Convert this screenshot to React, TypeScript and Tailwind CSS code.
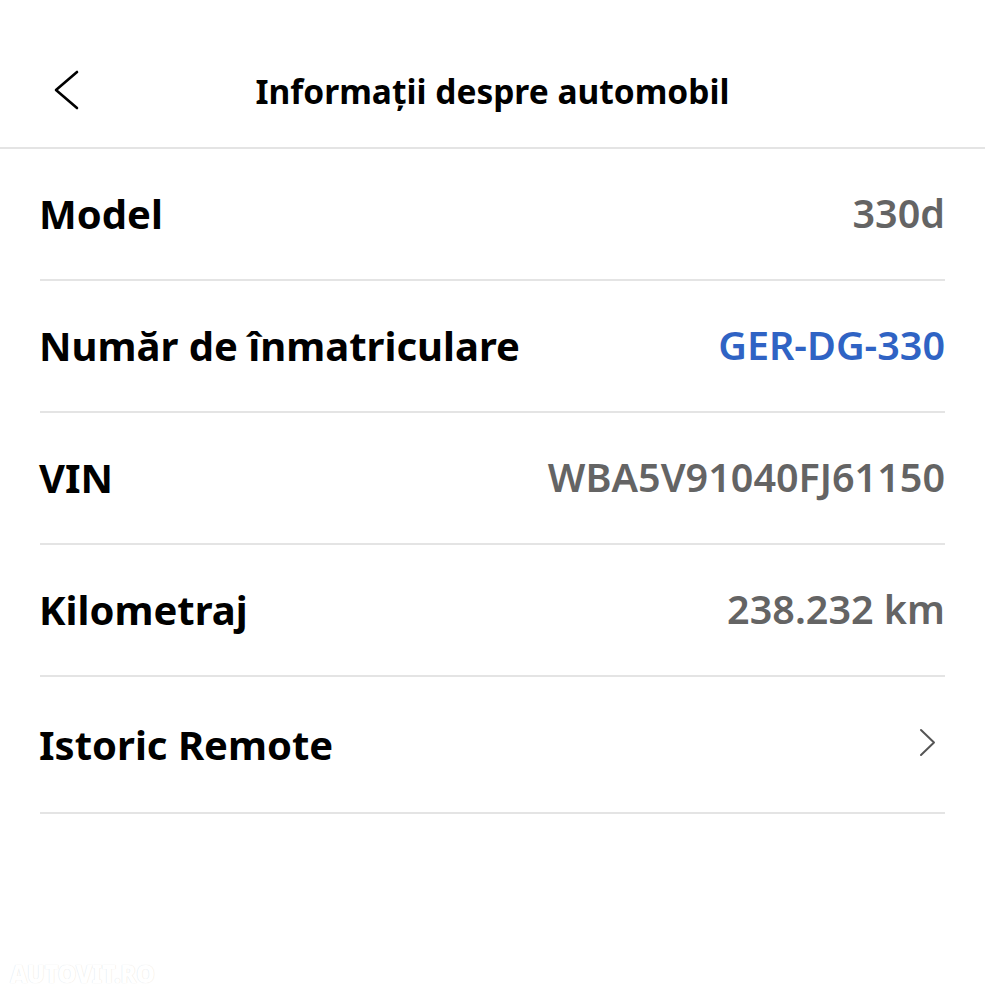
const rows = [
  { label: "Model", value: "330d" },
  { label: "Număr de înmatriculare", value: "GER-DG-330", link: true },
  { label: "VIN", value: "WBA5V91040FJ61150" },
  { label: "Kilometraj", value: "238.232 km" },
];

export default function App() {
  return (
    <div className="relative w-[985px] h-[1000px] bg-white overflow-hidden" style={{ fontFamily: '"Noto Sans", sans-serif' }}>
      <header className="h-[149px] flex items-center border-b-2 border-[#e4e4e4] relative">
        <button className="absolute left-[53px] top-[70px] text-black">
          <svg width="28" height="40" viewBox="0 0 28 40" fill="none" stroke="currentColor" strokeWidth="2.6" strokeLinecap="round" strokeLinejoin="round">
            <path d="M24 2 L3 20 L24 38" />
          </svg>
        </button>
        <h1 className="w-full text-center text-[33.5px] font-bold text-black pt-[36px]">
          Informații despre automobil
        </h1>
      </header>

      <div className="px-[40px]">
        {rows.map((r) => (
          <div key={r.label} className="h-[132px] flex items-center justify-between border-b-2 border-[#e4e4e4]">
            <span className="text-[40px] font-bold text-black -ml-[1px]">{r.label}</span>
            <span className={`text-[39.5px] font-semibold ${r.link ? "text-[#2f63c4]" : "text-[#646464]"}`}>
              {r.value}
            </span>
          </div>
        ))}
        <div className="h-[137px] flex items-center justify-between border-b-2 border-[#e4e4e4]">
          <span className="text-[40px] font-bold text-black -ml-[1px]">Istoric Remote</span>
          <svg width="18" height="29" viewBox="0 0 18 29" fill="none" stroke="#555" strokeWidth="2" strokeLinecap="round" strokeLinejoin="round" className="mr-[8px] -mt-[4px]">
            <path d="M2 2 L15 14.5 L2 27" />
          </svg>
        </div>
      </div>

      <div className="absolute left-[10px] bottom-[8px] text-[24px] font-black tracking-tight text-white" style={{ textShadow: "0 0 1px #d8d8d8" }}>
        AUTOVIT.RO
      </div>
    </div>
  );
}
